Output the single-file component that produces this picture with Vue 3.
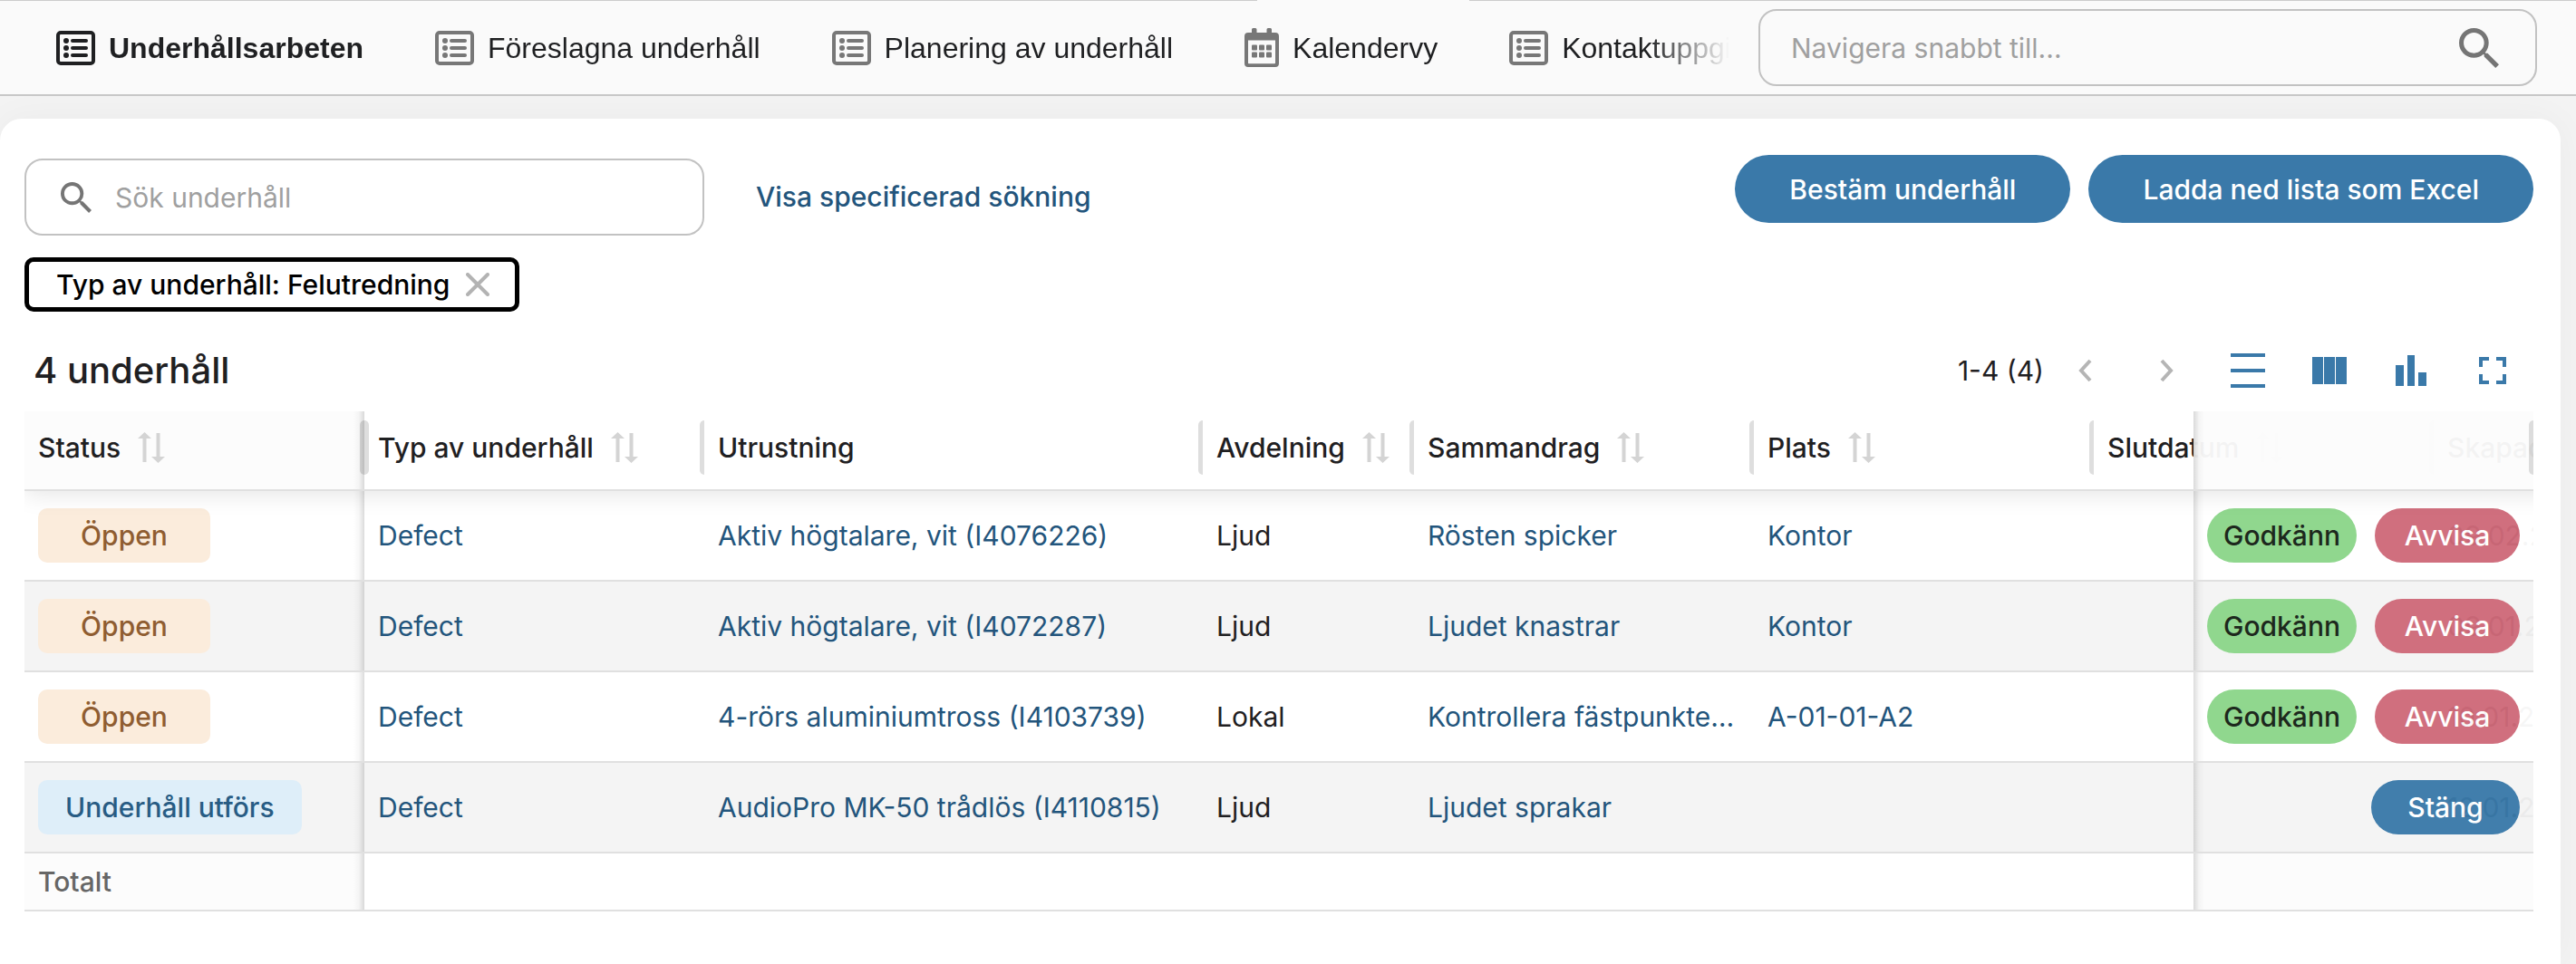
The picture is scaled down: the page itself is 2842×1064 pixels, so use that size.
<script setup>
import { ref } from 'vue';

const navItems = [
  { label: 'Underhållsarbeten', icon: 'list', active: true },
  { label: 'Föreslagna underhåll', icon: 'list' },
  { label: 'Planering av underhåll', icon: 'list' },
  { label: 'Kalendervy', icon: 'calendar' },
  { label: 'Kontaktuppgifter', icon: 'list' },
];

const columns = [
  { label: 'Status', name: 'status', sortable: true },
  { label: 'Typ av underhåll', name: 'type', sortable: true },
  { label: 'Utrustning', name: 'equipment' },
  { label: 'Avdelning', name: 'department', sortable: true },
  { label: 'Sammandrag', name: 'summary', sortable: true },
  { label: 'Plats', name: 'place', sortable: true },
  { label: 'Slutdatum', name: 'end', sortable: true },
  { label: 'Skapad', name: 'created', sortable: true },
  { label: '', name: 'actions' },
];

const rows = [
  { status: 'Öppen', equipment: 'Aktiv högtalare, vit (I4076226)', department: 'Ljud', summary: 'Rösten spicker', place: 'Kontor', created: '09.02.2026' },
  { status: 'Öppen', equipment: 'Aktiv högtalare, vit (I4072287)', department: 'Ljud', summary: 'Ljudet knastrar', place: 'Kontor', created: '09.01.2026' },
  { status: 'Öppen', equipment: '4-rörs aluminiumtross (I4103739)', department: 'Lokal', summary: 'Kontrollera fästpunkterna', place: 'A-01-01-A2', created: '10.01.2026' },
  { status: 'Underhåll utförs', equipment: 'AudioPro MK-50 trådlös (I4110815)', department: 'Ljud', summary: 'Ljudet sprakar', place: '', created: '12.01.2026' },
];

const quickNav = ref('');
const search = ref('');
const filterVisible = ref(true);
</script>

<template>
  <div class="page">
    <header class="topbar">
      <nav class="tabs">
        <a v-for="item in navItems" :key="item.label" href="#" class="tab" :class="{ active: item.active }">
          <svg v-if="item.icon === 'list'" class="tab-icon" viewBox="0 0 43 38">
            <rect x="2" y="2" width="39" height="34" rx="3" fill="none" stroke="currentColor" stroke-width="4" />
            <g fill="currentColor">
              <circle cx="11" cy="11" r="3" /><circle cx="11" cy="19" r="3" /><circle cx="11" cy="27" r="3" />
              <rect x="16" y="9" width="19" height="4" rx="2" />
              <rect x="16" y="17" width="19" height="4" rx="2" />
              <rect x="16" y="25" width="19" height="4" rx="2" />
            </g>
          </svg>
          <svg v-else class="tab-icon calendar" viewBox="0 0 38 43">
            <path fill="currentColor" fill-rule="evenodd" d="M8 1.500a1.500 1.500 0 0 1 1.500-1.500h2.500a1.500 1.500 0 0 1 1.500 1.500V5h11V1.500A1.500 1.500 0 0 1 26 0h2.500A1.500 1.500 0 0 1 30 1.500V5h4a4 4 0 0 1 4 4v30a4 4 0 0 1-4 4H4a4 4 0 0 1-4-4V9a4 4 0 0 1 4-4h4zM4 13.500V38.500a.8.8 0 0 0 .8.8h28.400a.8.8 0 0 0 .8-.8V13.500z" />
            <g fill="currentColor">
              <rect x="8" y="18.500" width="6" height="6" rx="1" /><rect x="16" y="18.500" width="6" height="6" rx="1" /><rect x="24" y="18.500" width="6" height="6" rx="1" />
              <rect x="8" y="26.500" width="6" height="6" rx="1" /><rect x="16" y="26.500" width="6" height="6" rx="1" /><rect x="24" y="26.500" width="6" height="6" rx="1" />
            </g>
          </svg>
          {{ item.label }}
        </a>
      </nav>
      <label class="field quick-nav">
        <input v-model="quickNav" type="text" aria-label="Navigera snabbt till" placeholder="Navigera snabbt till...">
        <svg class="big-search" viewBox="3 3 17.500 17.500"><path fill="currentColor" d="M15.500 14h-.79l-.28-.27A6.470 6.470 0 0 0 16 9.500 6.500 6.500 0 1 0 9.500 16c1.610 0 3.090-.59 4.230-1.570l.27.280v.79l5 4.990L20.490 19zm-6 0C7.010 14 5 11.990 5 9.500S7.010 5 9.500 5 14 7.010 14 9.500 11.990 14 9.500 14" /></svg>
      </label>
    </header>

    <main class="panel">
      <div class="toolbar">
        <label class="field search">
          <svg class="small-search" viewBox="3 3 17.500 17.500"><path fill="currentColor" d="M15.500 14h-.79l-.28-.27A6.470 6.470 0 0 0 16 9.500 6.500 6.500 0 1 0 9.500 16c1.610 0 3.090-.59 4.230-1.570l.27.280v.79l5 4.990L20.490 19zm-6 0C7.010 14 5 11.990 5 9.500S7.010 5 9.500 5 14 7.010 14 9.500 11.990 14 9.500 14" /></svg>
          <input v-model="search" type="text" aria-label="Sök underhåll" placeholder="Sök underhåll">
        </label>
        <a href="#" class="specific">Visa specificerad sökning</a>
        <div class="main-actions">
          <button type="button" class="primary">Bestäm underhåll</button>
          <button type="button" class="primary">Ladda ned lista som Excel</button>
        </div>
      </div>

      <div class="filters">
        <button v-if="filterVisible" type="button" class="chip" @click="filterVisible = false">
          Typ av underhåll: Felutredning
          <svg viewBox="0 0 26 26"><path d="M2 2L24 24M24 2L2 24" stroke="currentColor" stroke-width="4" stroke-linecap="round" /></svg>
        </button>
      </div>

      <div class="list-head">
        <h1>4 underhåll</h1>
        <span class="range">1-4 (4)</span>
        <button type="button" class="icon-button muted" aria-label="Föregående sida">
          <svg viewBox="0 0 38 38"><path d="M25 8L15 19L25 30" fill="none" stroke="currentColor" stroke-width="4" /></svg>
        </button>
        <button type="button" class="icon-button muted" aria-label="Nästa sida">
          <svg viewBox="0 0 38 38"><path d="M14 8L24 19L14 30" fill="none" stroke="currentColor" stroke-width="4" /></svg>
        </button>
        <button type="button" class="icon-button" aria-label="Radhöjd">
          <svg viewBox="0 0 38 38"><path fill="currentColor" d="M0 0h38v4H0zM0 17h38v4H0zM0 34h38v4H0z" /></svg>
        </button>
        <button type="button" class="icon-button" aria-label="Kolumner">
          <svg viewBox="0 0 38 38"><path fill="currentColor" d="M0 4h12v30H0zM13 4h12v30H13zM26 4h12v30H26z" /></svg>
        </button>
        <button type="button" class="icon-button" aria-label="Diagram">
          <svg viewBox="0 0 38 38"><path fill="currentColor" d="M2 13h9v23H2zM15 2h8v34h-8zM27 21h9v15h-9z" /></svg>
        </button>
        <button type="button" class="icon-button" aria-label="Helskärm">
          <svg viewBox="0 0 38 38"><path d="M6 15V6H15M23 6H32V15M32 23V32H23M15 32H6V23" fill="none" stroke="currentColor" stroke-width="4" /></svg>
        </button>
      </div>

      <div class="table-wrap">
        <table>
          <colgroup>
            <col v-for="col in columns" :key="col.name" :class="'col-' + col.name">
          </colgroup>
          <thead>
            <tr>
              <th v-for="col in columns" :key="col.name" :class="col.name">
                <div class="th-inner">
                  {{ col.label }}
                  <svg v-if="col.sortable" class="sort" viewBox="0 0 30 34">
                    <path fill="currentColor" d="M7.500 0L15 7H9.500V33H5.500V7H0zM20.500 1h4V27H30L22.500 34L15 27h5.500z" />
                  </svg>
                </div>
                <span class="handle"></span>
              </th>
            </tr>
          </thead>
          <tbody>
            <tr v-for="row in rows" :key="row.equipment">
              <td class="status"><span class="tag" :class="{ progress: row.status !== 'Öppen' }">{{ row.status }}</span></td>
              <td><a href="#">Defect</a></td>
              <td><a href="#">{{ row.equipment }}</a></td>
              <td>{{ row.department }}</td>
              <td class="link-cell"><a href="#">{{ row.summary }}</a></td>
              <td><a href="#">{{ row.place }}</a></td>
              <td></td>
              <td>{{ row.created }}</td>
              <td class="actions">
                <div v-if="row.status === 'Öppen'" class="row-actions">
                  <button type="button" class="approve">Godkänn</button>
                  <button type="button" class="reject">Avvisa</button>
                </div>
                <div v-else class="row-actions">
                  <button type="button" class="close">Stäng</button>
                </div>
              </td>
            </tr>
          </tbody>
          <tfoot>
            <tr>
              <td class="status">Totalt</td>
              <td v-for="n in 7" :key="n"></td>
              <td class="actions"></td>
            </tr>
          </tfoot>
        </table>
      </div>
    </main>
  </div>
</template>

<style>
body {
  background: #f3f3f3;
}
</style>

<style scoped>
* {
  box-sizing: border-box;
}
.page {
  display: flex;
  flex-direction: column;
  min-height: 100vh;
  overflow: hidden;
  font-family: Inter, sans-serif;
  font-size: 30px;
  line-height: 36px;
  color: #1f2022;
}
a {
  color: #23557c;
  text-decoration: none;
}
button {
  font: inherit;
  border: none;
  cursor: pointer;
}
svg {
  display: block;
  flex: none;
}

.topbar {
  position: relative;
  z-index: 1;
  display: flex;
  align-items: center;
  height: 106px;
  padding: 0 43px 0 62px;
  background: #fafafa;
  border-top: 1px solid #ccc;
  border-bottom: 2px solid #c8c8c8;
}
/* opening in the top line above the calendar tab */
.topbar::before {
  content: '';
  position: absolute;
  top: -1px;
  left: 1387px;
  width: 234px;
  height: 1px;
  background: #fafafa;
}
.tabs {
  flex: 1;
  min-width: 0;
  display: flex;
  gap: 79px;
  margin-right: 32px;
  overflow: hidden;
  mask-image: linear-gradient(to right, #000 calc(100% - 90px), transparent);
}
.tab {
  display: flex;
  align-items: center;
  gap: 15px;
  flex: none;
  height: 50px;
  font-family: "Liberation Sans", sans-serif;
  font-size: 32px;
  color: #1f2022;
  white-space: nowrap;
}
.tab.active {
  font-weight: 700;
}
.tab-icon {
  width: 43px;
  height: 38px;
  color: #777;
}
.active .tab-icon {
  color: #1f2022;
}
.tab-icon.calendar {
  width: 38px;
  height: 43px;
}

.field {
  display: flex;
  align-items: center;
  height: 85px;
  border: 2px solid #c2c2c2;
  border-radius: 20px;
  color: #757575;
}
.field input {
  flex: 1;
  min-width: 0;
  padding: 0;
  border: none;
  outline: none;
  background: none;
  font: inherit;
  color: #1f2022;
}
.field input::placeholder {
  color: #a0a0a0;
  opacity: 1;
}
.quick-nav {
  flex: 0 1 859px;
  padding: 0 40px 0 34px;
}
.big-search {
  width: 44px;
  height: 44px;
}
.small-search {
  width: 34px;
  height: 34px;
}

.panel {
  flex: 1;
  margin: 25px 17px 0 0;
  padding: 40px 30px 58px 27px;
  background: #fff;
  border-radius: 24px 24px 0 0;
  box-shadow: 0 0 40px rgba(0, 0, 0, 0.04);
}
.toolbar {
  display: flex;
  align-items: flex-start;
}
.search {
  flex: 0 1 750px;
  gap: 26px;
  margin-top: 4px;
  padding: 0 38px;
}
.specific {
  margin: 28px 0 0 57px;
  font-weight: 500;
}
.main-actions {
  display: flex;
  gap: 20px;
  margin-left: auto;
}
.primary {
  height: 75px;
  padding: 0 60px;
  border-radius: 38px;
  background: #3a79a9;
  color: #fff;
  font-weight: 500;
}

.filters {
  margin-top: 24px;
}
.chip {
  display: flex;
  align-items: center;
  gap: 18px;
  height: 60px;
  padding: 0 28px 0 30px;
  border: 5px solid #000;
  border-radius: 10px;
  background: #fff;
  color: #000;
  font-weight: 500;
}
.chip svg {
  width: 26px;
  height: 26px;
  color: #b3b3b3;
}

.list-head {
  display: flex;
  align-items: center;
  height: 90px;
  margin-top: 20px;
}
h1 {
  margin: 0 auto 0 10px;
  font-size: 40px;
  line-height: 48px;
  font-weight: 500;
}
.icon-button {
  display: flex;
  justify-content: center;
  width: 90px;
  padding: 0;
  background: none;
  color: #3a79a9;
}
.icon-button.muted {
  color: #b5b5b5;
}
.icon-button svg {
  width: 38px;
  height: 38px;
}

.table-wrap {
  overflow: hidden;
}
table {
  table-layout: fixed;
  width: 3408px;
  border-collapse: separate;
  border-spacing: 0;
}
col {
  width: 375px;
}
.col-equipment {
  width: 550px;
}
.col-department {
  width: 233px;
}
thead {
  position: relative;
  z-index: 3;
  box-shadow: 0 4px 24px rgba(0, 0, 0, 0.1);
}
th,
td {
  height: 100px;
  padding: 0 15px;
  border-bottom: 2px solid #e0e0e0;
  background: #fff;
  text-align: left;
  font-weight: 400;
  white-space: nowrap;
  overflow: hidden;
  text-overflow: ellipsis;
}
.link-cell {
  color: #23557c;
}
th {
  position: relative;
  height: 88px;
  padding-bottom: 6px;
  font-weight: 500;
  overflow: visible;
}
.th-inner {
  display: flex;
  align-items: center;
  gap: 19px;
}
.sort {
  width: 30px;
  height: 34px;
  color: #d4d4d4;
}
.handle {
  position: absolute;
  top: 10px;
  right: -5px;
  width: 10px;
  height: 60px;
  border-radius: 5px;
  background: rgba(0, 0, 0, 0.13);
}
tbody tr:nth-child(even) td {
  background-color: #f4f4f4;
}
tfoot td {
  height: 64px;
  color: #666;
  font-weight: 500;
}
.status,
.actions {
  position: sticky;
  z-index: 2;
}
.status {
  left: 0;
  background-image: linear-gradient(to left, rgba(0, 0, 0, 0.14), rgba(0, 0, 0, 0.03) 6px, transparent 12px);
}
.actions {
  right: 0;
  opacity: 0.96;
  background-image: linear-gradient(to right, rgba(0, 0, 0, 0.14), rgba(0, 0, 0, 0.03) 6px, transparent 12px);
}
th.status,
th.actions,
tfoot .status,
tfoot .actions {
  background-color: #fcfcfc;
}
.tag {
  display: inline-block;
  min-width: 190px;
  height: 60px;
  padding: 0 30px;
  border-radius: 10px;
  background: #fbecdc;
  color: #8f5d31;
  font-weight: 500;
  line-height: 60px;
  text-align: center;
  vertical-align: middle;
}
.tag.progress {
  background: #deeef9;
  color: #285c84;
}
.row-actions {
  display: flex;
  justify-content: flex-end;
  gap: 20px;
}
.row-actions button {
  min-width: 164px;
  height: 60px;
  padding: 0 18px;
  border-radius: 30px;
  font-weight: 500;
  color: #fff;
}
.row-actions .approve {
  background: #8cd68a;
  color: #142014;
}
.row-actions .reject {
  min-width: 160px;
  background: #cf6a79;
}
.row-actions .close {
  background: #3a79a9;
}
</style>
